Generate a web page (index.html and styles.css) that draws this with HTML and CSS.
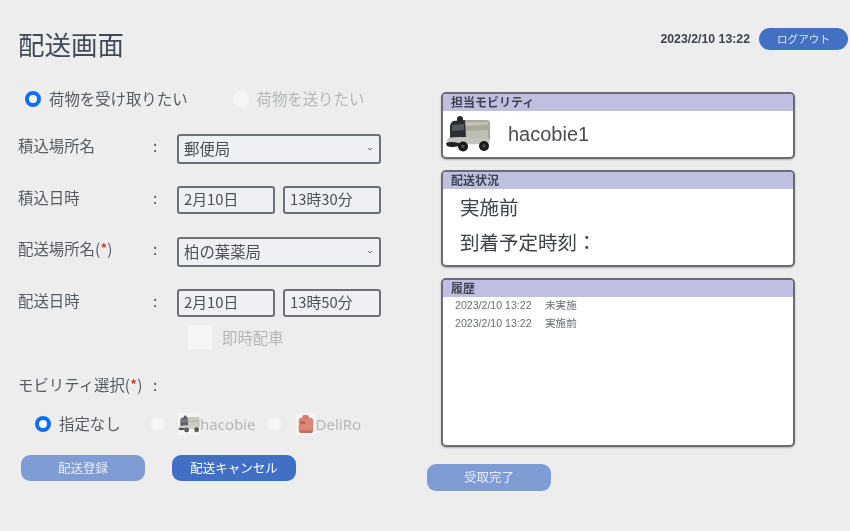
FILE: index.html
```html
<!DOCTYPE html>
<html lang="ja">
<head>
<meta charset="utf-8">
<title>配送画面</title>
<link rel="stylesheet" href="styles.css">
</head>
<body>
<svg class="defs" width="0" height="0" aria-hidden="true">
  <symbol id="robot" viewBox="0 0 46 38">
    <path d="M17 7 Q17 5 20 5 L42 5 Q45 5 45 8 L45 25 L17 26 Z" fill="#a9a89c"/>
    <path d="M19 7 L43 7 L43 10 L19 11 Z" fill="#c2c1b5"/>
    <path d="M27 13 h5 v2 h-5 Z M35 13 h6 v2 h-6 Z" fill="#a3b198"/>
    <path d="M19 16 L43 15 L43 24 L19 25 Z" fill="#bebdb2"/>
    <path d="M12 4 Q12 1 15 1 Q18 1 18 4 L18 7 L12 7 Z" fill="#26282b"/>
    <path d="M8 6 L20 5 L21 22 L5 23 L5 11 Q5 8 8 6 Z" fill="#2c2e32"/>
    <path d="M7 10 L19 9 L19 15 L7 16 Z" fill="#55585e"/>
    <path d="M3 23 Q12 21 44 24 L45 28 Q30 30 20 29 L3 28 Q1 26 3 23 Z" fill="#c4c4c0"/>
    <path d="M1 28 Q6 26 14 28 L14 31 Q6 33 2 31 Z" fill="#1e1e1e"/>
    <circle cx="18" cy="31.500" r="5" fill="#1a1a1a"/>
    <circle cx="39" cy="31" r="5" fill="#1a1a1a"/>
    <circle cx="18" cy="31.500" r="1.800" fill="#50504e"/>
    <circle cx="39" cy="31" r="1.800" fill="#50504e"/>
  </symbol>
  <symbol id="deliro" viewBox="0 0 20 22">
    <rect x="2" y="4" width="16" height="17" rx="3" fill="#d9604a"/>
    <rect x="6" y="1" width="7" height="5" rx="2" fill="#c94f3c"/>
    <rect x="4" y="8" width="5" height="3" fill="#8a3b30"/>
    <rect x="3" y="18" width="14" height="3" rx="1" fill="#a8493a"/>
  </symbol>
</svg>
<div class="page">
  <header class="top">
    <h1 class="title">配送画面</h1>
    <div class="session">
      <span class="clock">2023/2/10 13:22</span>
      <button class="btn btn-logout" type="button">ログアウト</button>
    </div>
  </header>
  <main class="main">
    <section class="form">
      <div class="radio-row role-row">
        <span class="radio on"></span><span class="radio-text">荷物を受け取りたい</span>
        <span class="radio off role-off"></span><span class="radio-text muted">荷物を送りたい</span>
      </div>
      <div class="row row-pick">
        <span class="label">積込場所名</span><span class="colon">:</span>
        <div class="field select"><span>郵便局</span><svg class="chev" viewBox="0 0 6 4"><path d="M1 1 L3 3 L5 1" fill="none" stroke="#666" stroke-width="1"/></svg></div>
      </div>
      <div class="row row-pick-date">
        <span class="label">積込日時</span><span class="colon">:</span>
        <div class="dates"><div class="field date">2月10日</div><div class="field date">13時30分</div></div>
      </div>
      <div class="row row-drop">
        <span class="label">配送場所名(<i class="req">*</i>)</span><span class="colon">:</span>
        <div class="field select"><span>柏の葉薬局</span><svg class="chev" viewBox="0 0 6 4"><path d="M1 1 L3 3 L5 1" fill="none" stroke="#666" stroke-width="1"/></svg></div>
      </div>
      <div class="row row-drop-date">
        <span class="label">配送日時</span><span class="colon">:</span>
        <div class="dates"><div class="field date">2月10日</div><div class="field date">13時50分</div></div>
      </div>
      <div class="check-row">
        <span class="checkbox"></span><span class="muted check-text">即時配車</span>
      </div>
      <div class="row mobility-row">
        <span class="label">モビリティ選択(<i class="req">*</i>)</span><span class="colon">:</span>
      </div>
      <div class="radio-row mobility-options">
        <span class="radio on"></span><span class="radio-text none-text">指定なし</span>
        <span class="radio off small opt-a"></span>
        <span class="thumb thumb-a"><svg class="thumb-svg"><use href="#robot"/></svg></span><span class="muted opt-text">hacobie</span>
        <span class="radio off small opt-b"></span>
        <span class="thumb thumb-b"><svg class="thumb-svg"><use href="#deliro"/></svg></span><span class="muted opt-text">DeliRo</span>
      </div>
      <div class="actions">
        <button class="btn btn-faded" type="button">配送登録</button>
        <button class="btn btn-solid" type="button">配送キャンセル</button>
      </div>
    </section>
    <section class="side">
      <div class="panel panel-mobility">
        <div class="panel-head">担当モビリティ</div>
        <div class="mobility-body">
          <svg class="robot"><use href="#robot"/></svg>
          <span class="mobility-name">hacobie1</span>
        </div>
      </div>
      <div class="panel panel-status">
        <div class="panel-head">配送状況</div>
        <div class="status-body">
          <p class="status-line">実施前</p>
          <p class="status-line">到着予定時刻：</p>
        </div>
      </div>
      <div class="panel panel-history">
        <div class="panel-head">履歴</div>
        <ul class="history">
          <li><span class="h-date">2023/2/10 13:22</span><span>未実施</span></li>
          <li><span class="h-date">2023/2/10 13:22</span><span>実施前</span></li>
        </ul>
      </div>
      <button class="btn btn-faded btn-done" type="button">受取完了</button>
    </section>
  </main>
</div>
</body>
</html>
```

FILE: styles.css
```css
* { box-sizing: border-box; }
html, body { margin: 0; padding: 0; background: #ededed; }
body {
  font-family: "Noto Sans CJK JP", "Noto Sans", sans-serif;
  color: #4a5058;
  width: 850px;
  height: 531px;
  overflow: hidden;
}
.defs { position: absolute; }
.page { width: 850px; height: 531px; filter: blur(0.45px); }

.top { display: flex; justify-content: space-between; align-items: flex-start; height: 88px; padding: 27px 2px 0 18px; }
.title { margin: 0; font-size: 26.5px; line-height: 34px; font-weight: 400; color: #3f4a58; }
.session { display: flex; align-items: center; gap: 9px; margin-top: 1px; }
.clock { font: bold 12.3px/22px "Liberation Sans", sans-serif; color: #3c4250; }

.btn { border: 0; color: #fff; font-family: inherit; font-size: 12.5px; padding: 0 0 2px; display: block; }
.btn-logout { width: 89px; height: 22px; border-radius: 11px; background: #4271c4; font-size: 10.6px; color: #dfe6f5; }
.btn-faded { width: 124px; height: 26px; border-radius: 9px; background: #7f9dd4; color: #e6ecf7; }
.btn-solid { width: 124px; height: 26px; border-radius: 9px; background: #4070c4; }

.main { display: flex; }
.form { width: 427px; padding-left: 18px; }
.side { flex: 1; padding-top: 4px; }

.radio-row { display: flex; align-items: center; font-size: 15.4px; }
.role-row { height: 22px; padding-left: 7px; }
.radio { display: block; flex: none; width: 16px; height: 16px; border-radius: 50%; }
.radio.on { background: #fff; border: 4px solid #0d6efd; }
.radio.off { background: #f5f5f5; }
.radio.small { width: 14px; height: 14px; }
.radio-text { margin-left: 8px; color: #555b62; line-height: 22px; padding-bottom: 2px; white-space: nowrap; }
.role-off { margin-left: 45px; }
.muted { color: #b4b6b8; }

.row { display: flex; align-items: flex-start; font-size: 15.4px; }
.label { width: 133px; line-height: 22px; color: #555b62; white-space: nowrap; }
.colon { width: 26px; line-height: 22px; padding-left: 2px; color: #555b62; }
.req { font-style: normal; color: #e0202a; }
.row-pick { margin-top: 24px; }
.row-pick-date { margin-top: 22px; }
.row-drop { margin-top: 23px; }
.row-drop-date { margin-top: 22px; }

.field { border: 2px solid #6d7076; border-radius: 3px; background: #eef0f4; font-size: 14.8px; color: #4a5058; padding-left: 5px; }
.select { width: 204px; height: 30px; display: flex; align-items: center; justify-content: space-between; padding: 0 6px 3px 5px; font-size: 15.4px; }
.chev { width: 6px; height: 4px; margin-top: 3px; }
.dates { display: flex; gap: 8px; }
.date { width: 98px; height: 28px; line-height: 22px; }

.check-row { display: flex; align-items: center; height: 24px; margin-top: 8px; padding-left: 170px; }
.checkbox { width: 24px; height: 24px; background: #f5f5f5; }
.check-text { margin-left: 10px; font-size: 15.4px; }

.mobility-row { margin-top: 24px; }
.mobility-options { height: 24px; margin-top: 17px; padding-left: 17px; }
.none-text { width: 62px; box-sizing: content-box; }
.opt-a { margin-left: 30px; }
.thumb { display: flex; align-items: center; justify-content: center; height: 22px; background: #f4f4f4; }
.thumb-a { width: 22px; margin-left: 13px; }
.thumb-b { width: 20px; margin-left: 15px; }
.thumb-svg { width: 100%; height: 20px; opacity: .75; }
.opt-text { font-family: "Noto Sans", sans-serif; font-size: 15px; line-height: 22px; }
.opt-b { margin-left: 11px; }

.actions { display: flex; gap: 27px; margin-top: 19px; padding-left: 3px; }

.panel { width: 354px; margin-left: 14px; border: 2px solid #6a6b76; border-radius: 5px; background: #fff; overflow: hidden; box-shadow: 0 1px 2px rgba(0,0,0,.25); }
.panel-head { height: 17px; background: #bfbfe2; padding: 0 0 2px 8px; font-size: 12px; line-height: 15px; font-weight: 700; color: #3f4350; }
.panel-mobility { height: 67px; }
.panel-status { height: 97px; margin-top: 11px; }
.panel-history { height: 169px; margin-top: 11px; }

.mobility-body { display: flex; align-items: center; height: 46px; padding-left: 2px; }
.robot { width: 46px; height: 38px; flex: none; }
.mobility-name { margin-left: 17px; font: 20px/1 "Liberation Sans", sans-serif; color: #4a4e54; }

.status-body { padding-left: 17px; }
.status-line { margin: 0; font-size: 19.5px; line-height: 35px; color: #3e4248; }

.history { list-style: none; margin: -1px 0 0; padding: 0 0 0 12px; font: 10.6px/18px "Liberation Sans", "Noto Sans CJK JP", sans-serif; color: #6a6d72; }
.history li { display: flex; height: 18px; }
.h-date { width: 90px; }

.btn-done { margin-top: 17px; height: 27px; }
```
